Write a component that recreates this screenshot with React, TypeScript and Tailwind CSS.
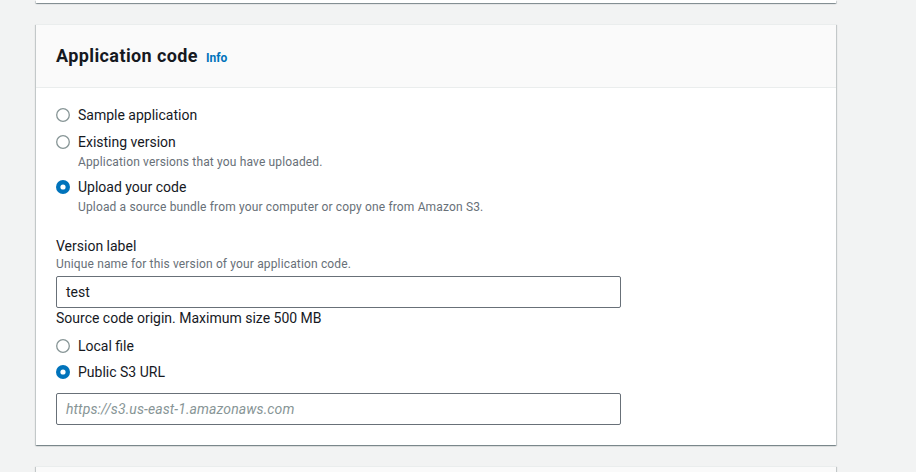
import React from "react";

/* Elastic Beanstalk style "Application code" panel */

const cardShadow =
  "shadow-[0_1px_1px_0_rgba(0,28,36,0.3),1px_1px_1px_0_rgba(0,28,36,0.15),-1px_1px_1px_0_rgba(0,28,36,0.15)]";

function Radio({ checked }: { checked?: boolean }) {
  return (
    <svg width="14" height="14" viewBox="0 0 14 14" className="shrink-0">
      {checked ? (
        <>
          <circle cx="7" cy="7" r="7" fill="#0073bb" />
          <circle cx="7" cy="7" r="2.6" fill="#ffffff" />
        </>
      ) : (
        <circle cx="7" cy="7" r="6.3" fill="#ffffff" stroke="#879596" strokeWidth="1.3" />
      )}
    </svg>
  );
}

function RadioItem({
  label,
  desc,
  checked,
  className = "",
}: {
  label: string;
  desc?: string;
  checked?: boolean;
  className?: string;
}) {
  return (
    <div className={className}>
      <div className="flex items-center gap-2 h-5">
        <Radio checked={checked} />
        <span className="text-[14px] leading-5 text-[#16191f]">{label}</span>
      </div>
      {desc && (
        <div className="mt-[2px] pl-[22px] text-[12px] leading-4 tracking-[0.15px] text-[#687078]">
          {desc}
        </div>
      )}
    </div>
  );
}

export default function App() {
  return (
    <div
      className="min-h-screen w-[916px] bg-[#f2f3f3] pl-[36px] overflow-hidden"
      style={{ fontFamily: "Roboto, 'Noto Sans', Arial, sans-serif" }}
    >
      {/* bottom of the previous card */}
      <div className={`w-[800px] h-[3px] bg-white ${cardShadow}`} />

      <div className={`mt-[21px] w-[800px] bg-white border-t border-[#eaeded] ${cardShadow}`}>
        <div className="h-[63px] bg-[#fafafa] border-b border-[#eaeded] px-5 flex items-center">
          <h2 className="text-[18px] font-bold tracking-[0.4px] text-[#16191f] leading-6">
            Application code
          </h2>
          <a className="ml-2 mt-[3px] text-[12px] font-bold text-[#0073bb]">Info</a>
        </div>

        <div className="px-5 pt-[17px] pb-5">
          <RadioItem label="Sample application" />
          <RadioItem
            className="mt-[7px]"
            label="Existing version"
            desc="Application versions that you have uploaded."
          />
          <RadioItem
            className="mt-[7px]"
            checked
            label="Upload your code"
            desc="Upload a source bundle from your computer or copy one from Amazon S3."
          />

          <div className="mt-[21px] text-[14px] leading-5 text-[#16191f]">Version label</div>
          <div className="text-[12px] leading-4 tracking-[0.15px] text-[#687078]">
            Unique name for this version of your application code.
          </div>
          <div className="mt-1 w-[565px] h-8 border border-[#687078] rounded-[2px] pl-[9px] flex items-center text-[14px] text-[#16191f]">
            test
          </div>

          <div className="text-[14px] leading-5 text-[#16191f]">
            Source code origin. Maximum size 500 MB
          </div>
          <RadioItem className="mt-[8px]" label="Local file" />
          <RadioItem className="mt-[6px]" checked label="Public S3 URL" />

          <div className="mt-[11px] w-[565px] h-8 border border-[#687078] rounded-[2px] pl-[9px] flex items-center text-[14px] italic tracking-[0.1px] text-[#879596]">
            https://s3.us-east-1.amazonaws.com
          </div>
        </div>
      </div>

      {/* top of the next card */}
      <div className={`mt-[21px] w-[800px] h-[20px] bg-[#fafafa] border-t border-[#eaeded] ${cardShadow}`} />
    </div>
  );
}
